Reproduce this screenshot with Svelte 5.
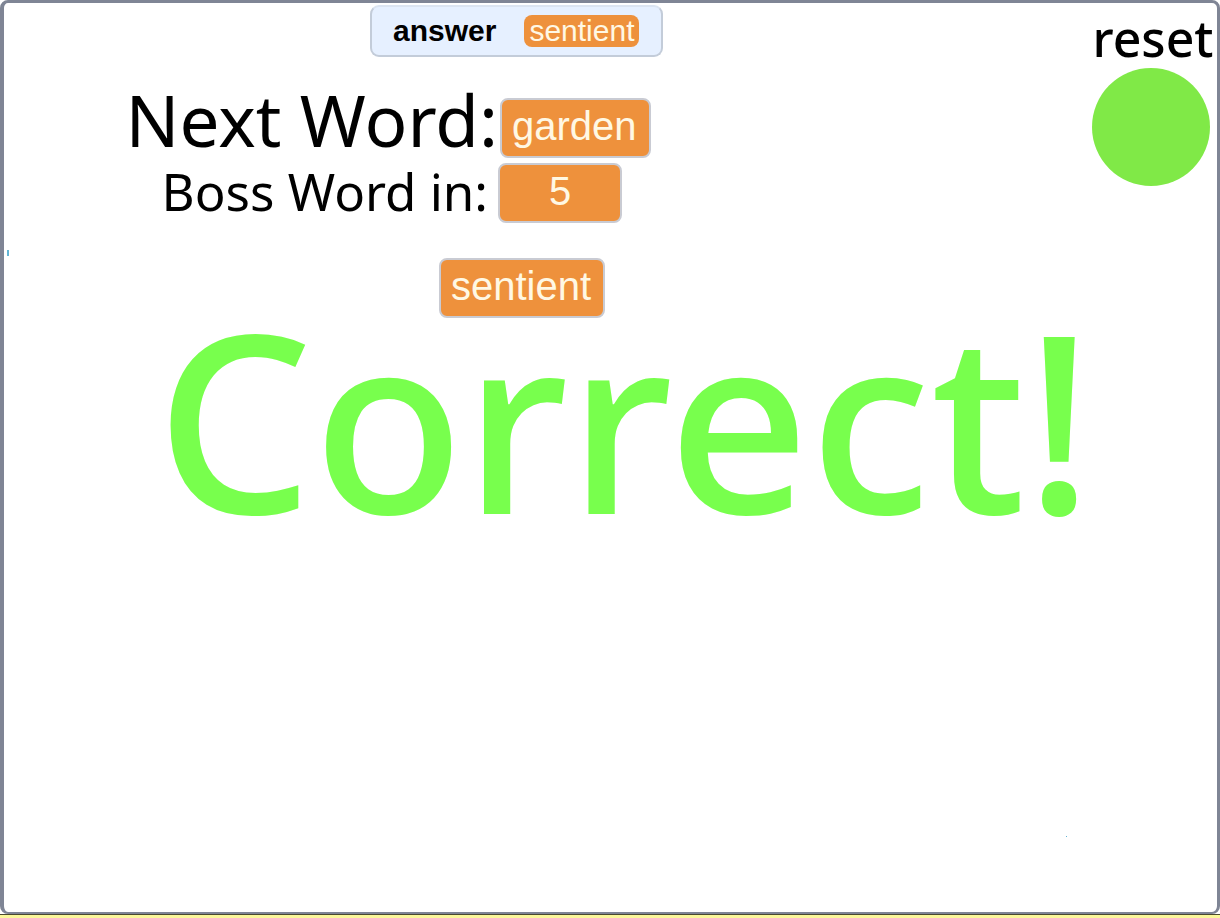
<script>
  let answer = $state('sentient');
  let currentWord = $state('sentient');
  let nextWord = $state('garden');
  let bossIn = $state(5);
  let result = $state('Correct!');

  function reset() {
    bossIn = 5;
  }
</script>

<div class="page">
  <main class="stage">
    <div class="board">
      <section class="words">
        <div class="monitor">
          <span class="name">answer</span>
          <output class="chip">{answer}</output>
        </div>
        <div class="row next">
          <span class="label">Next Word:</span>
          <output class="value">{nextWord}</output>
        </div>
        <div class="row boss">
          <span class="label">Boss Word in:</span>
          <output class="value count">{bossIn}</output>
        </div>
        <output class="value current">{currentWord}</output>
      </section>
      <div class="reset">
        <label for="reset">reset</label>
        <button id="reset" type="button" aria-label="reset" onclick={reset}></button>
      </div>
    </div>
    <p class="result">{result}</p>
    <i class="mark edge"></i>
    <i class="mark dot"></i>
  </main>
</div>

<style>
  :global(body) {
    margin: 0;
    background: #fbf79a;
  }

  .page {
    box-sizing: border-box;
    min-height: 100vh;
    padding-bottom: 4px;
    display: flex;
    font-family: 'Noto Sans', sans-serif;
    font-weight: 400;
    color: #000;
    background: linear-gradient(#fff, #fff) top / 100% calc(100% - 4px) no-repeat;
  }

  .stage {
    position: relative;
    box-sizing: border-box;
    flex: 1;
    min-width: 0;
    overflow: hidden;
    border: 3px solid #7f8595;
    border-width: 3px 3px 2px 4px;
    border-radius: 8px;
    background: #fff;
  }

  .page::after {
    content: '';
    position: fixed;
    inset: auto 0 3px 0;
    height: 1px;
    background: #4a4930;
  }

  .board {
    display: flex;
    justify-content: space-between;
    align-items: flex-start;
  }

  .words {
    flex: 1;
    display: flex;
    flex-direction: column;
    align-items: flex-start;
  }

  .monitor {
    box-sizing: border-box;
    height: 52px;
    margin: 2px 0 0 366px;
    padding: 0 22px 0 21px;
    display: flex;
    align-items: center;
    gap: 28px;
    border: 2px solid #c3ccd9;
    border-top-color: #dbe4f1;
    border-radius: 9px;
    background: #e6f0ff;
    font-family: 'Liberation Sans', sans-serif;
    font-size: 30px;
    line-height: 32px;
  }

  .name {
    font-weight: 700;
  }

  .chip {
    padding: 0 5px;
    border-radius: 8px;
    background: #ee913c;
    color: #fff8e4;
    font-weight: 400;
  }

  .row {
    display: grid;
    grid-template-columns: 484px auto;
    column-gap: 10px;
    align-items: start;
  }

  .label {
    text-align: right;
    white-space: nowrap;
  }

  .next {
    margin-top: 41px;
    grid-template-columns: 494px auto;
    column-gap: 2px;
    font-size: 71px;
    line-height: 44px;
  }

  .boss {
    margin-top: 5px;
    font-size: 51px;
    line-height: 56px;
  }

  .value {
    box-sizing: border-box;
    height: 60px;
    padding: 0 12px 0 10px;
    border: 2px solid #c9cbd3;
    border-radius: 8px;
    background: #ee913c;
    color: #fff8e4;
    font-family: 'Liberation Sans', sans-serif;
    font-size: 40px;
    font-weight: 400;
    line-height: 52px;
    text-align: center;
  }

  .count {
    width: 124px;
    padding: 0;
  }

  .current {
    margin: 35px 0 0 435px;
  }

  .reset {
    padding: 6px 3px 0 0;
    display: flex;
    flex-direction: column;
    align-items: center;
    font-size: 50px;
    font-weight: 500;
    line-height: 59px;
  }

  .reset button {
    width: 118px;
    height: 118px;
    margin-right: 4px;
    padding: 0;
    border: 0;
    border-radius: 50%;
    background: #80e947;
    cursor: pointer;
  }

  .result {
    margin: 0 0 0 28px;
    color: #78ff4d;
    font-size: 247px;
    font-weight: 500;
    line-height: 200px;
    text-align: center;
    white-space: nowrap;
  }

  .mark {
    position: absolute;
    background: #62b5d5;
  }

  .edge {
    left: 3px;
    top: 247px;
    width: 2px;
    height: 6px;
  }

  .dot {
    right: 150px;
    bottom: 75px;
    width: 1px;
    height: 1px;
  }
</style>
